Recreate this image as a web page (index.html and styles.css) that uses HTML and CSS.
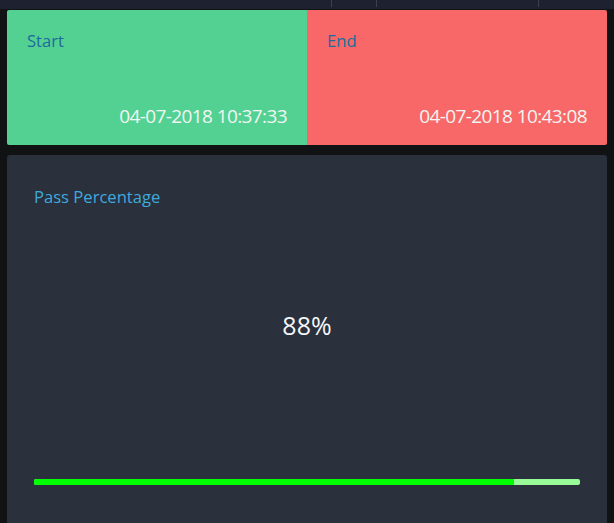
FILE: index.html
```html
<!DOCTYPE html>
<html>
<head>
<meta charset="utf-8">
<link rel="stylesheet" href="styles.css">
</head>
<body>
<div class="topbar">
  <span class="tick t1"></span>
  <span class="tick t2"></span>
  <span class="tick t3"></span>
</div>
<div class="content">
  <div class="times">
    <div class="time start">
      <div class="label">Start</div>
      <div class="value">04-07-2018 10:37:33</div>
    </div>
    <div class="time end">
      <div class="label">End</div>
      <div class="value">04-07-2018 10:43:08</div>
    </div>
  </div>
  <div class="panel">
    <div class="panel-title">Pass Percentage</div>
    <div class="percent">88%</div>
    <div class="bar"><div class="bar-fill" style="width: 88%"></div></div>
  </div>
</div>
</body>
</html>
```

FILE: styles.css
```css
* { box-sizing: border-box; }
html, body { margin: 0; padding: 0; }
body {
  background: #111214;
  font-family: "Source Sans Pro", "Open Sans", "Noto Sans", sans-serif;
  width: 614px;
  height: 523px;
  overflow: hidden;
}
.topbar {
  height: 9px;
  background: #1e2230;
  position: relative;
}
.tick {
  position: absolute;
  top: 0;
  width: 1px;
  height: 7px;
  background: #3c414c;
}
.t1 { left: 331px; }
.t2 { left: 376px; }
.t3 { left: 538px; }
.content {
  padding: 1px 7px 0 7px;
  display: flex;
  flex-direction: column;
  gap: 10px;
}
.times {
  display: flex;
  height: 135px;
  border-radius: 2px;
  overflow: hidden;
}
.time {
  flex: 1;
  padding: 20px 20px 0 20px;
  display: flex;
  flex-direction: column;
}
.start { background: #53d192; }
.end { background: #f96868; }
.label {
  font-size: 16.6px;
  color: #1f6a9c;
  line-height: 22px;
}
.value {
  margin-top: 52px;
  text-align: right;
  font-size: 19px;
  font-weight: 500;
  letter-spacing: -0.6px;
  color: #f2f6f2;
  line-height: 24px;
}
.panel {
  background: #2a303c;
  border-radius: 3px 3px 0 0;
  height: 380px;
  padding: 30px 27px 0 27px;
}
.panel-title {
  font-size: 16.6px;
  color: #40a9dc;
  line-height: 24px;
}
.percent {
  margin-top: 101px;
  text-align: center;
  font-size: 25px;
  color: #f4f6f8;
  line-height: 30px;
}
.bar {
  margin-top: 139px;
  height: 6px;
  background: #98fb98;
  border-radius: 2px;
  overflow: hidden;
}
.bar-fill {
  height: 100%;
  background: #00ff00;
}
```
